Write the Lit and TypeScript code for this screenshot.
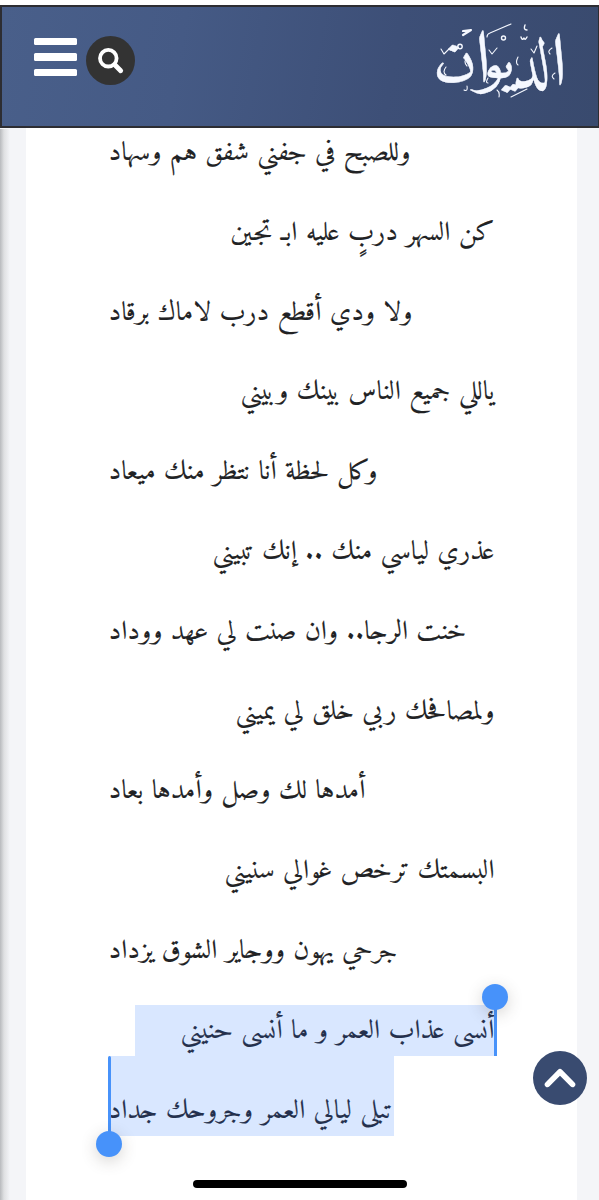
import { LitElement, html, css, svg } from "lit";
import { customElement, property } from "lit/decorators.js";

interface Verse {
  text: string;
  width: number;
  first: boolean;
  mark?: "start" | "end";
}

const VERSES: Verse[] = [
  { text: "وللصبح في جفني شفق هم وسهاد", width: 302, first: false },
  { text: "كن السهر دربٍ عليه ابـ تجين", width: 264, first: true },
  { text: "ولا ودي أقطع درب لاماك برقاد", width: 304, first: false },
  { text: "ياللي جميع الناس بينك وبيني", width: 254, first: true },
  { text: "وكل لحظة أنا نتظر منك ميعاد", width: 269, first: false },
  { text: "عذري لياسي منك .. إنك تبيني", width: 282, first: true },
  { text: "خنت الرجا.. وان صنت لي عهد ووداد", width: 358, first: false },
  { text: "ولمصافحك ربي خلق لي يميني", width: 259, first: true },
  { text: "أمدها لك وصل وأمدها بعاد", width: 257, first: false },
  { text: "البسمتك ترخص غوالي سنيني", width: 270, first: true },
  { text: "جرحي يهون ووجاير الشوق يزداد", width: 289, first: false },
  { text: "أنسى عذاب العمر و ما أنسى حنيني", width: 314, first: true, mark: "start" },
  { text: "تبلى ليالي العمر وجروحك جداد", width: 284, first: false, mark: "end" },
];

@customElement("verse-line")
export class VerseLine extends LitElement {
  @property({ attribute: false }) verse!: Verse;

  static styles = css`
    :host { display: flex; direction: ltr; height: 79.8px; width: 386px; }
    .first { margin-left: auto; }
    svg { display: block; overflow: visible; height: 79.8px; position: relative; z-index: 1; }
    text {
      font-family: Amiri, "Noto Naskh Arabic", "Scheherazade New", "DejaVu Sans", serif;
      font-size: 26.5px;
      fill: #212224;
      stroke: #212224;
      stroke-width: 0.15px;
    }
    .marked text { fill: #24304d; stroke: #24304d; }
  `;

  render() {
    const v = this.verse;
    return html`<svg class="${v.first ? "first" : ""} ${v.mark ? "marked" : ""}" width=${v.width} height="79.8">
      ${svg`<text x=${v.width - 0.5} y="52" direction="rtl" textLength=${v.width} lengthAdjust="spacingAndGlyphs">${v.text}</text>`}
    </svg>`;
  }
}

@customElement("app-root")
export class AppRoot extends LitElement {
  static styles = css`
    :host {
      display: block; position: relative; width: 599px; height: 1200px;
      overflow: hidden; background: #fff;
      font-family: "DejaVu Sans", sans-serif;
    }
    .screen { display: flex; flex-direction: column; height: 1200px; padding-top: 5px; box-sizing: border-box; }
    header {
      flex: none; height: 123px; box-sizing: border-box; border: 2px solid #2d2d32;
      border-right-width: 1px;
      background: linear-gradient(100deg, #495f8a 0%, #455a85 30%, #3d4f77 65%, #394a6e 100%);
      display: flex; justify-content: space-between; align-items: flex-start;
      padding: 0 30px 0 32px;
    }
    .tools { display: flex; gap: 9px; padding-top: 29px; }
    .menu { display: flex; flex-direction: column; gap: 8px; padding-top: 2px; width: 43px; }
    .menu i { height: 7.4px; border-radius: 1.5px; background: #fff; }
    .search { display: block; width: 49px; height: 49px; }
    .logo { display: block; width: 138px; height: 92px; margin-top: 8px; overflow: visible; }
    .logo text {
      font-family: Amiri, "Noto Naskh Arabic", "Scheherazade New", "DejaVu Sans", serif;
      fill: #f5f8ff; stroke: #f5f8ff; stroke-width: 0.4px;
    }
    .page { flex: 1; min-height: 0; background: #f4f5f8; padding: 0 22px 0 26px; overflow: hidden; }
    .paper { display: flow-root; background: #fff; height: 100%; padding-left: 83px; box-sizing: border-box; }
    .poem { display: flex; flex-direction: column; margin-top: -20px; }
    .edge {
      position: absolute; left: 0; top: 129px; bottom: 0; width: 10px;
      background: linear-gradient(90deg, #b8babd, #dfe0e2 40%, rgba(244, 245, 248, 0));
    }
    .band { position: absolute; background: #d9e7ff; }
    .band.a { left: 135px; top: 1005px; width: 361px; height: 51px; }
    .band.b { left: 109px; top: 1056px; width: 285px; height: 80px; }
    .caret { position: absolute; z-index: 2; width: 3px; background: #4792fa; }
    .caret.a { left: 494px; top: 1000px; height: 56px; }
    .caret.b { left: 108px; top: 1056px; height: 80px; border-radius: 2px 2px 0 0; }
    .knob {
      position: absolute; z-index: 3; width: 26px; height: 26px; border-radius: 50%;
      background: #4792fa; box-shadow: 0 4px 16px rgba(70, 60, 50, 0.22);
    }
    .knob.a { left: 482px; top: 984px; }
    .knob.b { left: 96px; top: 1131px; }
    .up { position: absolute; z-index: 3; left: 533px; top: 1051px; width: 54px; height: 54px; }
    .home {
      position: absolute; z-index: 3; left: 193px; top: 1180px; width: 214px; height: 8px;
      border-radius: 4px; background: #000;
    }
  `;

  render() {
    return html`
      <div class="screen">
        <header>
          <div class="tools">
            <div class="menu"><i></i><i></i><i></i></div>
            <svg class="search" viewBox="0 0 49 49">
              <circle cx="24.5" cy="24.5" r="24.5" fill="#333" />
              <circle cx="22.3" cy="22.2" r="8.3" fill="none" stroke="#fff" stroke-width="3.8" />
              <path d="M29 29 L34.7 34.8" stroke="#fff" stroke-width="4.8" stroke-linecap="round" />
            </svg>
          </div>
          <svg class="logo" viewBox="430 15 138 92">
            <text direction="rtl"><tspan x="567" y="85" font-size="74">ا</tspan><tspan x="551" y="84" font-size="68" textLength="39" lengthAdjust="spacingAndGlyphs">لد</tspan><tspan x="516" y="78" font-size="56" textLength="40" lengthAdjust="spacingAndGlyphs">يو</tspan><tspan x="491" y="82" font-size="74">ا</tspan><tspan x="478" y="79" font-size="56" textLength="46" lengthAdjust="spacingAndGlyphs">ن</tspan></text>
            <g fill="none" stroke="#f5f8ff" stroke-width="1.1" stroke-linecap="round" stroke-linejoin="round">
              <path d="M487 37 Q487 34 490 33 L511 24" />
              <path d="M463 31 L471 30 L463 35" stroke-width="2.2" />
              <circle cx="460" cy="46.5" r="2.2" stroke-width="1.4" />
              <circle cx="503.5" cy="38" r="2" stroke-width="1.4" />
              <path d="M441 49 L444 54 L449 49 M489 50 L492 54 L497 48 M531 49 L534 53 L537 46" />
              <path d="M521 37 q1 4 3 1 q1 3 3 -1 M525 25 q-2 5 2 5" stroke-width="1.4" />
              <path d="M518 57 q-3 6 0 8 M552 48 q-5 3 -2 6 M555 73 q-5 3 -1 6 M467 57 q-4 5 0 9 M446 67 q-4 5 0 8 M488 78 q-3 5 0 5 M467 86 q1 6 -3 4 M497 90 q3 2 2 7" />
              <path d="M511 97 L527 89" />
            </g>
          </svg>
        </header>
        <main class="page">
          <div class="paper">
            <div class="poem">${VERSES.map((v) => html`<verse-line .verse=${v}></verse-line>`)}</div>
          </div>
        </main>
      </div>
      <div class="edge"></div>
      <div class="band a"></div>
      <div class="band b"></div>
      <div class="caret a"></div>
      <div class="caret b"></div>
      <div class="knob a"></div>
      <div class="knob b"></div>
      <svg class="up" viewBox="0 0 54 54">
        <circle cx="27" cy="27" r="27" fill="#394b70" />
        <path d="M14.5 33.4 L27 20.8 L39.5 33.4" fill="none" stroke="#fff" stroke-width="5.6" stroke-linecap="round" stroke-linejoin="round" />
      </svg>
      <div class="home"></div>
    `;
  }
}
